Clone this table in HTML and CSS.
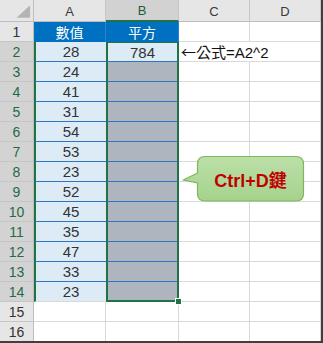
FILE: index.html
```html
<!DOCTYPE html>
<html>
<head>
<meta charset="utf-8">
<link rel="stylesheet" href="styles.css">
</head>
<body>
<div class="sheet">
  <div class="grid">
    <div class="corner"><svg width="34" height="22" viewBox="0 0 34 22"><polygon points="17,18 31,18 31,5" fill="#b4b4b4"/></svg></div>
    <div class="colhead">A</div>
    <div class="colhead sel">B</div>
    <div class="colhead">C</div>
    <div class="colhead">D</div>

    <div class="rowhead">1</div>
    <div class="title">數值</div>
    <div class="title">平方</div>
    <div class="cell"></div>
    <div class="cell"></div>

    <div class="rowhead sel">2</div>
    <div class="a">28</div>
    <div class="b first lite">784</div>
    <div class="cell spill"><span class="arrow">←</span>公式=A2^2</div>
    <div class="cell"></div>

    <div class="rowhead sel">3</div><div class="a">24</div><div class="b"></div><div class="cell"></div><div class="cell"></div>
    <div class="rowhead sel">4</div><div class="a">41</div><div class="b"></div><div class="cell"></div><div class="cell"></div>
    <div class="rowhead sel">5</div><div class="a">31</div><div class="b"></div><div class="cell"></div><div class="cell"></div>
    <div class="rowhead sel">6</div><div class="a">54</div><div class="b"></div><div class="cell"></div><div class="cell"></div>
    <div class="rowhead sel">7</div><div class="a">53</div><div class="b"></div><div class="cell"></div><div class="cell"></div>
    <div class="rowhead sel">8</div><div class="a">23</div><div class="b"></div><div class="cell"></div><div class="cell"></div>
    <div class="rowhead sel">9</div><div class="a">52</div><div class="b"></div><div class="cell"></div><div class="cell"></div>
    <div class="rowhead sel">10</div><div class="a">45</div><div class="b"></div><div class="cell"></div><div class="cell"></div>
    <div class="rowhead sel">11</div><div class="a">35</div><div class="b"></div><div class="cell"></div><div class="cell"></div>
    <div class="rowhead sel">12</div><div class="a">47</div><div class="b"></div><div class="cell"></div><div class="cell"></div>
    <div class="rowhead sel">13</div><div class="a">33</div><div class="b"></div><div class="cell"></div><div class="cell"></div>
    <div class="rowhead sel">14</div><div class="a last">23</div><div class="b last"><span class="handle"></span></div><div class="cell"></div><div class="cell"></div>
    <div class="rowhead">15</div><div class="cell"></div><div class="cell"></div><div class="cell"></div><div class="cell"></div>
    <div class="rowhead">16</div><div class="cell"></div><div class="cell"></div><div class="cell"></div><div class="cell"></div>
  </div>
  <div class="callout">
    <svg class="bubble" width="124" height="48" viewBox="0 0 124 48">
      <defs>
        <linearGradient id="g" x1="0" y1="0" x2="0" y2="1">
          <stop offset="0" stop-color="#bbe0a8"/>
          <stop offset="1" stop-color="#a6d28d"/>
        </linearGradient>
      </defs>
      <path d="M23,1.5 H114 Q121.5,1.5 121.5,9 V38.5 Q121.5,46 114,46 H23 Q15.5,46 15.5,38.5 V28 L1.5,25 L15.5,18 V9 Q15.5,1.5 23,1.5 Z" fill="url(#g)" stroke="#7db75a" stroke-width="1.2"/>
    </svg>
    <span class="ctext">Ctrl+D鍵</span>
  </div>
</div>
</body>
</html>
```
FILE: styles.css
```css
html, body {
  margin: 0;
  padding: 0;
  background: #ffffff;
}
.sheet {
  position: relative;
  width: 321px;
  height: 341px;
  border-right: 2px solid #3f3f3f;
  border-bottom: 2px solid #3f3f3f;
  overflow: hidden;
  font-family: "Liberation Sans", Arial, "Noto Sans CJK TC", sans-serif;
  color: #222;
}
.grid {
  display: grid;
  grid-template-columns: 34px 72px 73px 71px 71px;
  grid-template-rows: 22px repeat(16, 20px);
}
.grid > div {
  box-sizing: border-box;
  display: flex;
  align-items: center;
  justify-content: center;
  border-right: 1px solid #d9d9d9;
  border-bottom: 1px solid #d9d9d9;
  font-size: 15px;
  white-space: nowrap;
}
.grid > .corner {
  background: #e6e6e6;
  border-right: 1px solid #bdbdbd;
  border-bottom: 1px solid #bdbdbd;
  padding: 0;
}
.corner svg { display: block; }
.grid > .colhead {
  background: #e6e6e6;
  border-right: 1px solid #c6c6c6;
  border-bottom: 1px solid #bdbdbd;
  font-size: 13px;
  color: #3a3a3a;
  padding-top: 1px;
}
.grid > .colhead.sel {
  background: #d2d2d2;
  color: #1f5c3a;
  border-bottom: 2px solid #217346;
}
.grid > .rowhead {
  background: #e6e6e6;
  border-right: 1px solid #bdbdbd;
  border-bottom: 1px solid #c6c6c6;
  font-size: 14px;
  color: #333;
}
.grid > .rowhead.sel {
  background: #d3d3d3;
  color: #1e6b45;
}
.grid > .title {
  background: #0070c0;
  color: #ffffff;
  border-right: 1px solid #2a84cc;
  border-bottom: 1px solid #0070c0;
  font-family: "Noto Sans CJK TC", sans-serif;
  font-size: 14px;
}
.grid > .a {
  background: #ddebf7;
  border-left: 2px solid #217346;
  border-right: none;
  border-bottom: 1px solid #2e75c0;
  color: #333;
}
.grid > .a.last {
  border-bottom: 1px solid #d9d9d9;
}
.grid > .b {
  position: relative;
  background: #aeb5bf;
  border-left: 2px solid #217346;
  border-right: 2px solid #217346;
  border-bottom: 1px solid #2e75c0;
  color: #333;
}
.grid > .b.first {
  border-top: 1px solid #217346;
}
.grid > .b.lite {
  background: #ddebf7;
}
.grid > .b.last {
  border-bottom: 2px solid #217346;
}
.handle {
  position: absolute;
  right: -5px;
  bottom: -5px;
  width: 5px;
  height: 5px;
  background: #217346;
  border: 1px solid #ffffff;
}
.grid > .spill {
  justify-content: flex-start;
  border-right-color: #ffffff;
  padding-left: 2px;
  overflow: visible;
  font-family: "Liberation Sans", "Noto Sans CJK TC", sans-serif;
  font-size: 15px;
  color: #111;
  position: relative;
  z-index: 1;
}
.arrow {
  font-family: "Noto Sans CJK TC", sans-serif;
  font-size: 15px;
}
.callout {
  position: absolute;
  left: 182px;
  top: 155px;
  width: 124px;
  height: 48px;
}
.bubble {
  position: absolute;
  left: 0;
  top: 0;
}
.ctext {
  position: absolute;
  left: 15px;
  right: 2px;
  top: 1px;
  bottom: 2px;
  display: flex;
  align-items: center;
  justify-content: center;
  font-family: "Liberation Sans", "Noto Sans CJK TC", sans-serif;
  font-weight: bold;
  font-size: 18px;
  color: #c00000;
}
```
